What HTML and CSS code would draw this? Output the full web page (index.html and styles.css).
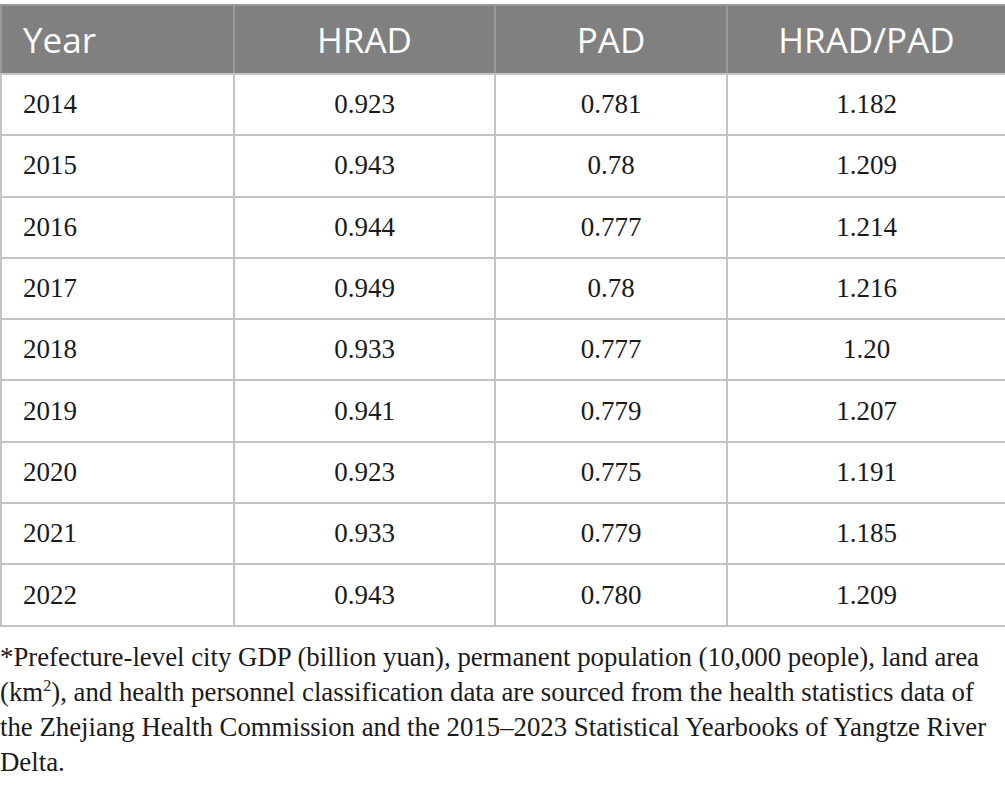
FILE: index.html
```html
<!DOCTYPE html>
<html>
<head>
<meta charset="utf-8">
<link rel="stylesheet" href="styles.css">
</head>
<body>
<table class="data">
  <colgroup>
    <col class="c1"><col class="c2"><col class="c3"><col class="c4">
  </colgroup>
  <thead>
    <tr><th class="left">Year</th><th>HRAD</th><th>PAD</th><th>HRAD/PAD</th></tr>
  </thead>
  <tbody>
    <tr><td class="left">2014</td><td>0.923</td><td>0.781</td><td>1.182</td></tr>
    <tr><td class="left">2015</td><td>0.943</td><td>0.78</td><td>1.209</td></tr>
    <tr><td class="left">2016</td><td>0.944</td><td>0.777</td><td>1.214</td></tr>
    <tr><td class="left">2017</td><td>0.949</td><td>0.78</td><td>1.216</td></tr>
    <tr><td class="left">2018</td><td>0.933</td><td>0.777</td><td>1.20</td></tr>
    <tr><td class="left">2019</td><td>0.941</td><td>0.779</td><td>1.207</td></tr>
    <tr><td class="left">2020</td><td>0.923</td><td>0.775</td><td>1.191</td></tr>
    <tr><td class="left">2021</td><td>0.933</td><td>0.779</td><td>1.185</td></tr>
    <tr><td class="left">2022</td><td>0.943</td><td>0.780</td><td>1.209</td></tr>
  </tbody>
</table>
<p class="note">*Prefecture-level city GDP (billion yuan), permanent population (10,000 people), land area (km<sup>2</sup>), and health personnel classification data are sourced from the health statistics data of the Zhejiang Health Commission and the 2015–2023 Statistical Yearbooks of Yangtze River Delta.</p>
</body>
</html>
```

FILE: styles.css
```css
html, body {
  margin: 0;
  padding: 0;
  background: #ffffff;
}
body {
  width: 1005px;
  padding-top: 4px;
}
.data {
  width: 1005px;
  border-collapse: collapse;
  table-layout: fixed;
}
.c1 { width: 233px; }
.c2 { width: 261px; }
.c3 { width: 232px; }
.c4 { width: 279px; }
.data th, .data td {
  border: 2px solid #c4c4c4;
  text-align: center;
  padding: 0;
}
.data th {
  background: #808080;
  color: #ffffff;
  font-family: "Open Sans", "Noto Sans", sans-serif;
  font-weight: 400;
  font-size: 35px;
  height: 67px;
  border-color: #9a9a9a;
  border-bottom-color: #c4c4c4;
}
.data td {
  font-family: "Liberation Serif", "Times New Roman", serif;
  font-size: 27px;
  color: #1a1a1a;
  height: 59.3px;
}
.data .left {
  text-align: left;
  padding-left: 21px;
}
.note {
  width: 995px;
  margin: 0;
  padding: 13px 0 0 0;
  font-family: "Liberation Serif", "Times New Roman", serif;
  font-size: 26.8px;
  line-height: 35px;
  color: #1a1a1a;
}
.note sup {
  font-size: 60%;
  line-height: 0;
  vertical-align: 0.6em;
}
```
